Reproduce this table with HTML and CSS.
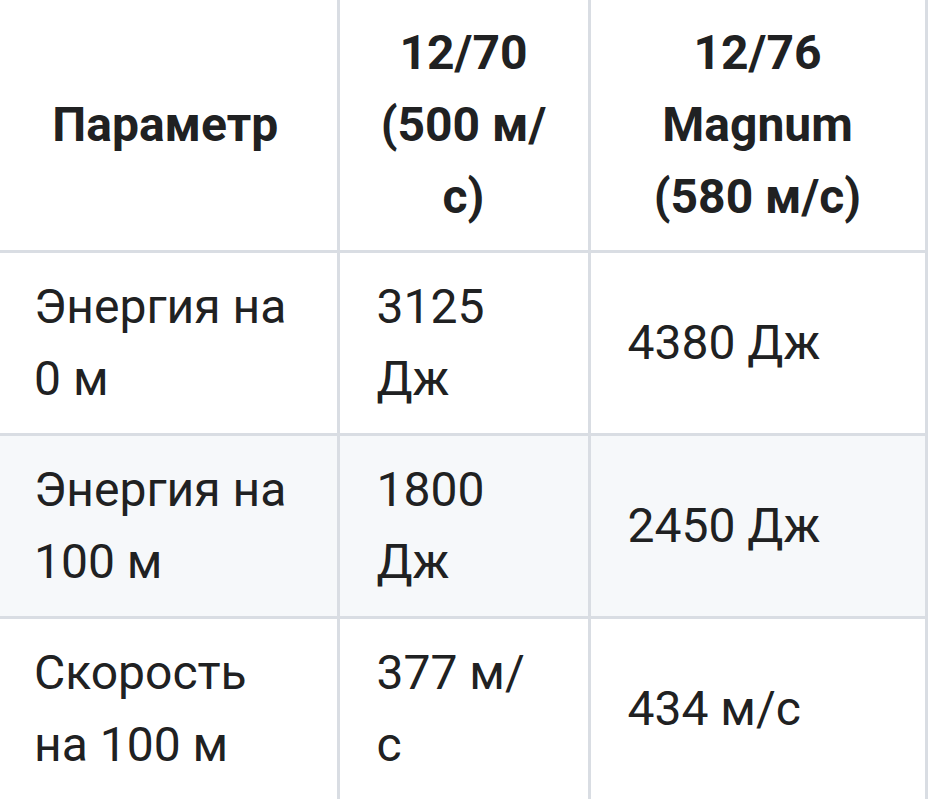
FILE: index.html
```html
<!DOCTYPE html>
<html lang="ru">
<head>
<meta charset="utf-8">
<link rel="stylesheet" href="styles.css">
</head>
<body>
<table class="data">
  <colgroup>
    <col class="c1">
    <col class="c2">
    <col class="c3">
  </colgroup>
  <thead>
    <tr>
      <th>Параметр</th>
      <th>12/70 (500 м/с)</th>
      <th>12/76 Magnum (580 м/с)</th>
    </tr>
  </thead>
  <tbody>
    <tr>
      <td>Энергия на 0 м</td>
      <td>3125 Дж</td>
      <td>4380 Дж</td>
    </tr>
    <tr class="alt">
      <td>Энергия на 100 м</td>
      <td>1800 Дж</td>
      <td>2450 Дж</td>
    </tr>
    <tr>
      <td>Скорость на 100 м</td>
      <td>377 м/с</td>
      <td>434 м/с</td>
    </tr>
  </tbody>
</table>
</body>
</html>
```

FILE: styles.css
```css
html, body {
  margin: 0;
  padding: 0;
  background: #ffffff;
}

.data {
  border-collapse: collapse;
  table-layout: fixed;
  width: 926px;
  font-family: Roboto, "Noto Sans", sans-serif;
  font-size: 48px;
  line-height: 72px;
  color: #202122;
}

.c1 { width: 338px; }
.c2 { width: 251px; }
.c3 { width: 337px; }

.data th,
.data td {
  border: 3px solid #d9dde3;
  padding: 18px 37px;
  vertical-align: middle;
  text-align: left;
}

.data th {
  font-weight: 700;
  text-align: center;
  padding-top: 17px;
  padding-bottom: 17px;
  border-top: none;
}

.data tr > :first-child {
  border-left: none;
  padding-left: 34px;
}

.data th:first-child {
  padding-right: 40px;
}

.data tbody tr:last-child td {
  border-bottom: none;
}

.data td:nth-child(2) {
  padding-right: 48px;
}

.data .alt td {
  background: #f6f8fa;
}
```
